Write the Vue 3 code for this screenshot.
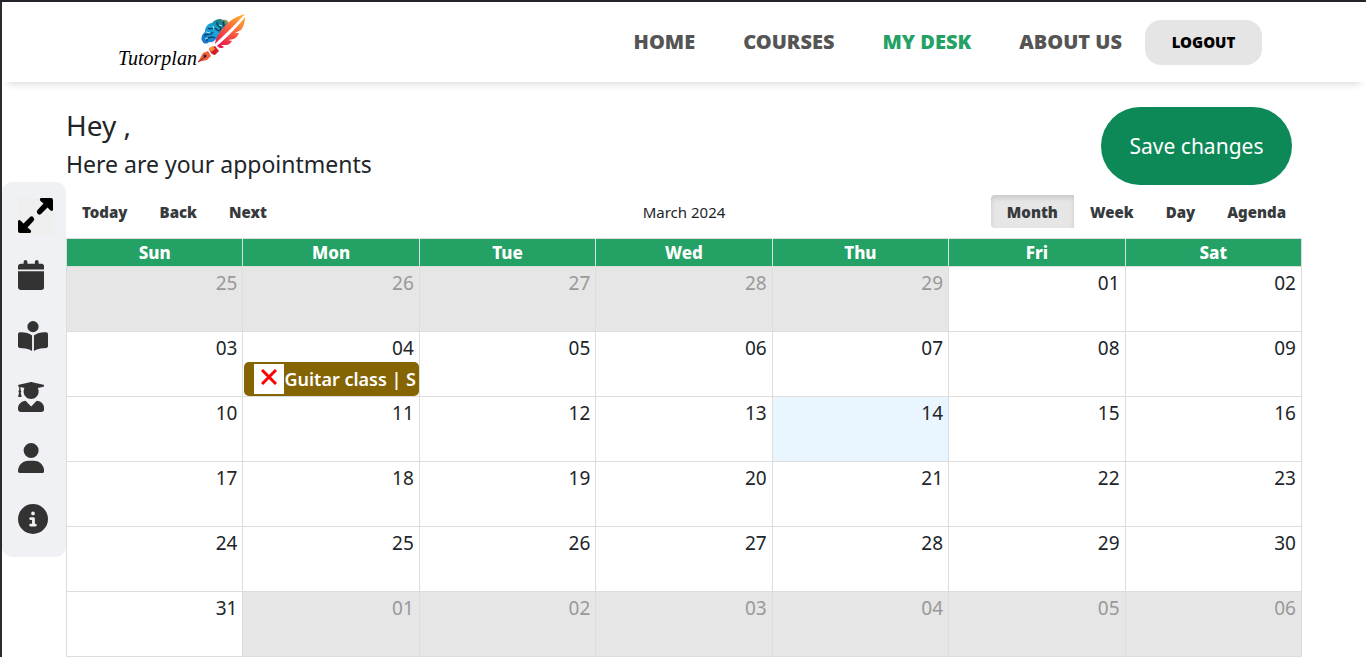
<script setup>
const navLinks = [
  { label: 'HOME', active: false },
  { label: 'COURSES', active: false },
  { label: 'MY DESK', active: true },
  { label: 'ABOUT US', active: false },
]

const sideLinks = [
  {
    label: 'Calendar',
    width: 448,
    path: 'M96 32V64H48C21.5 64 0 85.5 0 112v48H448V112c0-26.5-21.5-48-48-48H352V32c0-17.7-14.3-32-32-32s-32 14.3-32 32V64H160V32c0-17.7-14.3-32-32-32S96 14.3 96 32zM448 192H0V464c0 26.5 21.5 48 48 48H400c26.5 0 48-21.5 48-48V192z',
  },
  {
    label: 'Courses',
    width: 512,
    path: 'M160 96a96 96 0 1 1 192 0A96 96 0 1 1 160 96zm80 152V512l-48.4-24.2c-20.9-10.4-43.5-17-66.8-19.3l-96-9.6C12.5 457.2 0 443.5 0 427V224c0-17.7 14.3-32 32-32H62.3c63.6 0 125.6 19.6 177.7 56zm32 264V248c52.1-36.4 114.1-56 177.7-56H480c17.7 0 32 14.3 32 32V427c0 16.4-12.5 30.2-28.8 31.8l-96 9.6c-23.2 2.3-45.9 8.9-66.8 19.3L272 512z',
  },
  {
    label: 'Students',
    width: 448,
    path: 'M319.4 320.6L224 416l-95.4-95.4C57.1 323.7 0 382.2 0 454.4v9.6c0 26.5 21.5 48 48 48h352c26.5 0 48-21.5 48-48v-9.6c0-72.2-57.1-130.7-128.6-133.8zM13.6 79.8l6.4 1.5v58.4c-7 4.2-12 11.5-12 20.3 0 8.4 4.6 15.4 11.1 19.7L3.5 242c-1.7 6.9 2.1 14 7.6 14h41.8c5.5 0 9.3-7.1 7.6-14l-15.6-62.3C51.4 175.4 56 168.4 56 160c0-8.8-5-16.1-12-20.3V87.1l66 15.9c-8.6 17.2-14 36.4-14 57 0 70.7 57.3 128 128 128s128-57.3 128-128c0-20.6-5.3-39.8-14-57l96.3-23.2c18.2-4.4 18.2-27.1 0-31.5l-190.4-46c-13-3.1-26.7-3.1-39.7 0L13.6 48.2c-18.1 4.4-18.1 27.2 0 31.6z',
  },
  {
    label: 'Profile',
    width: 448,
    path: 'M224 256A128 128 0 1 0 224 0a128 128 0 1 0 0 256zm-45.7 48C79.8 304 0 383.8 0 482.3C0 498.7 13.3 512 29.7 512H418.3c16.4 0 29.7-13.3 29.7-29.7C448 383.8 368.2 304 269.7 304H178.3z',
  },
  {
    label: 'About',
    width: 512,
    path: 'M256 512A256 256 0 1 0 256 0a256 256 0 1 0 0 512zM216 336h24V272H216c-13.3 0-24-10.7-24-24s10.7-24 24-24h48c13.3 0 24 10.7 24 24v88h8c13.3 0 24 10.7 24 24s-10.7 24-24 24H216c-13.3 0-24-10.7-24-24s10.7-24 24-24zm40-208a32 32 0 1 1 0 64 32 32 0 1 1 0-64z',
  },
]

const views = ['Month', 'Week', 'Day', 'Agenda']
const weekdays = ['Sun', 'Mon', 'Tue', 'Wed', 'Thu', 'Fri', 'Sat']

const weeks = Array.from({ length: 6 }, (_, w) =>
  Array.from({ length: 7 }, (_, d) => {
    const date = new Date(2024, 1, 25 + w * 7 + d)
    const inMonth = date.getMonth() === 2
    return {
      label: String(date.getDate()).padStart(2, '0'),
      off: !inMonth,
      today: inMonth && date.getDate() === 14,
      event: inMonth && date.getDate() === 4 ? 'Guitar class | S' : '',
    }
  })
)
</script>

<template>
  <div class="page">
    <header class="topbar">
      <a class="logo" href="#">
        <span class="logo-text">Tutorplan</span>
        <svg class="logo-art" viewBox="0 0 50 50" aria-hidden="true">
          <defs>
            <linearGradient id="brain" x1="0" y1="1" x2="1" y2="0">
              <stop offset="0" stop-color="#1668c8" />
              <stop offset="0.5" stop-color="#19a9dc" />
              <stop offset="0.8" stop-color="#17808c" />
              <stop offset="1" stop-color="#f0b53c" />
            </linearGradient>
            <linearGradient id="feather" gradientUnits="userSpaceOnUse" x1="47" y1="2" x2="24" y2="34">
              <stop offset="0" stop-color="#ffb02e" />
              <stop offset="0.4" stop-color="#fc6f3c" />
              <stop offset="1" stop-color="#e8104f" />
            </linearGradient>
          </defs>
          <path d="M6 28C3 25 5 20 8 18C8 12 12 9 15 9C18 5 24 4 26 6C30 5 33 8 31 12L22 21C19 26 16 29 12 28C10 30 7 30 6 28Z" fill="url(#brain)" />
          <path d="M7 22c4-4 6 1 9-4M11 14c3 3 5-2 8 1s3 2 5 0M20 8c-1 5 4 3 4 7M27 7c-2 3 1 4 0 6M10 27c-1-3 4-5 8-3" fill="none" stroke="#0b3f66" stroke-width="1.4" />
          <path d="M9 18l4 1M16 12l1 3M22 11l3 1M8 25l3-1" fill="none" stroke="#8ceaf2" stroke-width="1.2" />
          <path d="M48 0C39 2 31 8 26 14C22 19 19 23 18 30C27 21 37 12 48 0Z" fill="url(#feather)" />
          <path d="M48 3C48 8 47 12 44 16L38 19L42 19C41 22 39 24 37 25L31 26L35 27C33 30 31 31 29 31L24 31L27 33C25 35 22 34 20 32C28 25 38 16 48 3Z" fill="url(#feather)" />
          <path d="M12 35l6-3 4 5-4 4c-3 0-5-3-6-6z" fill="#d31c2d" />
          <path d="M12 34l4-2 2 3-4 3z" fill="#fb8f2f" />
          <path d="M1 48L6 39L11 37L14 42L10 46Z" fill="#f0623a" />
          <path d="M1 48L8 43" stroke="#8a1634" stroke-width="1" />
          <circle cx="8" cy="42" r="1.6" fill="#4b1638" />
        </svg>
      </a>
      <nav class="nav">
        <a v-for="link in navLinks" :key="link.label" href="#" :class="{ active: link.active }">{{ link.label }}</a>
      </nav>
      <button type="button" class="logout">LOGOUT</button>
    </header>

    <div class="body">
      <aside class="sidebar">
        <button type="button" class="expand" aria-label="Expand menu">
          <svg viewBox="0 0 35 35" aria-hidden="true">
            <path d="M23 0H33Q35 0 35 2V12Q34 14 32 12L29.500 9.500L23 16Q21 17.500 19.500 15.500Q18 13.500 19.500 12L25.500 5.500L22.500 3Q21 1 23 0Z" />
            <path d="M12 35H2Q0 35 0 33V23Q1 21 3 23L5.500 25.500L12 19Q14 17.500 15.500 19.500Q17 21.500 15.500 23L9.500 29.500L12.500 32Q14 34 12 35Z" />
          </svg>
        </button>
        <a v-for="item in sideLinks" :key="item.label" href="#" :aria-label="item.label">
          <svg :viewBox="`0 0 ${item.width} 512`" aria-hidden="true"><path :d="item.path" /></svg>
        </a>
      </aside>

      <main class="content">
        <section class="intro">
          <div>
            <h1>Hey ,</h1>
            <h2>Here are your appointments</h2>
          </div>
          <button type="button" class="save">Save changes</button>
        </section>

        <div class="toolbar">
          <div class="group">
            <button type="button">Today</button>
            <button type="button">Back</button>
            <button type="button">Next</button>
          </div>
          <span class="period">March 2024</span>
          <div class="group">
            <button v-for="view in views" :key="view" type="button" :class="{ selected: view === 'Month' }">{{ view }}</button>
          </div>
        </div>

        <table class="month">
          <thead>
            <tr>
              <th v-for="day in weekdays" :key="day" scope="col">{{ day }}</th>
            </tr>
          </thead>
          <tbody>
            <tr v-for="(week, w) in weeks" :key="w">
              <td v-for="(day, d) in week" :key="d" :class="{ off: day.off, today: day.today }">
                <div class="date">{{ day.label }}</div>
                <div v-if="day.event" class="event">
                  <button type="button" aria-label="Delete appointment">
                    <svg viewBox="0 0 16 16" aria-hidden="true"><path d="M1 1L15 15M15 1L1 15" /></svg>
                  </button>
                  <span>{{ day.event }}</span>
                </div>
              </td>
            </tr>
          </tbody>
        </table>
      </main>
    </div>
  </div>
</template>

<style>
body {
  background: #fff;
  overflow: hidden;
}
</style>

<style scoped>
.page {
  box-sizing: border-box;
  min-height: 100vh;
  border-top: 2px solid #212529;
  border-left: 2px solid #2b2c2f;
  color: #212529;
  font-family: "Noto Sans", "Open Sans", sans-serif;
}
.page * {
  box-sizing: border-box;
}
button {
  font-family: inherit;
  border: 0;
  padding: 0;
  cursor: pointer;
}
a {
  text-decoration: none;
}
.topbar {
  display: flex;
  align-items: center;
  height: 80px;
  padding: 0 104px 0 116px;
  box-shadow: 0 8px 8px -6px rgba(0, 0, 0, 0.15);
}
.logo {
  display: flex;
  align-items: flex-end;
  color: #000;
}
.logo-text {
  font: italic 20px/24px "Liberation Serif", serif;
}
.logo-art {
  width: 50px;
  height: 50px;
  margin-bottom: 6px;
}
.nav {
  display: flex;
  gap: 48px;
  margin-left: auto;
  margin-right: 23px;
}
.nav a {
  color: #555;
  font-size: 20px;
  line-height: 28px;
  font-weight: 900;
}
.nav a.active {
  color: #24a164;
}
.logout {
  width: 117px;
  height: 45px;
  border-radius: 16px;
  background: #e5e5e5;
  color: #000;
  font-size: 15px;
  font-weight: 900;
}
.body {
  display: flex;
  align-items: flex-start;
}
.sidebar {
  display: flex;
  flex-direction: column;
  gap: 31px;
  flex: none;
  width: 64px;
  margin-top: 100px;
  padding: 16px 16px 23px;
  border-radius: 10px;
  background: #f0f1f4;
}
.sidebar svg {
  display: block;
  height: 30px;
  fill: #333;
}
.expand {
  display: flex;
  align-items: flex-start;
  width: 35px;
  height: 37px;
  margin-bottom: -6px;
  background: #efefef;
}
.sidebar .expand svg {
  height: 35px;
  fill: #000;
}
.content {
  flex: 1;
  min-width: 0;
  padding: 25px 64px 0 0;
}
.intro {
  display: flex;
  justify-content: space-between;
  height: 78px;
  padding-right: 10px;
}
h1,
h2 {
  margin: 0;
  font-weight: 400;
}
h1 {
  font-size: 28px;
  line-height: 36px;
}
h2 {
  font-size: 23px;
  line-height: 42px;
}
.save {
  width: 191px;
  height: 78px;
  border-radius: 39px;
  background: #0d8957;
  color: #fff;
  font-size: 21px;
}
.toolbar {
  display: grid;
  grid-template-columns: 1fr auto 1fr;
  align-items: center;
  margin: 10px 0;
}
.group {
  display: flex;
}
.group:last-child {
  justify-content: flex-end;
}
.group button {
  height: 33px;
  padding: 0 16px;
  background: none;
  color: #373a3c;
  font-size: 15px;
  font-weight: 900;
}
.group .selected {
  border-radius: 4px 0 0 4px;
  background: #e6e6e6;
  box-shadow: inset 0 3px 5px rgba(0, 0, 0, 0.125);
}
.period {
  font-size: 15px;
}
.month {
  width: 100%;
  table-layout: fixed;
  border-collapse: separate;
  border-spacing: 0;
  border: solid #ddd;
  border-width: 0 1px 1px 0;
}
th,
td {
  border: solid #ddd;
  border-width: 1px 0 0 1px;
}
th {
  height: 28px;
  padding: 0;
  background: #24a164;
  color: #fff;
  font-size: 17px;
  line-height: 26px;
  font-weight: 800;
}
td {
  height: 65px;
  padding: 0;
  vertical-align: top;
}
.date {
  padding: 2px 5px 0 0;
  font-size: 19px;
  line-height: 28px;
  text-align: right;
}
.off {
  background: #e6e6e6;
}
.off .date {
  color: #999;
}
.today {
  background: #eaf6ff;
}
.event {
  display: flex;
  align-items: center;
  height: 34px;
  margin-left: 1px;
  padding-left: 10px;
  border-radius: 5px;
  background: #856404;
  color: #fff;
  font-size: 18px;
  font-weight: 600;
  white-space: nowrap;
}
.event button {
  flex: none;
  width: 30px;
  height: 30px;
  background: #fff;
}
.event svg {
  width: 16px;
  height: 16px;
  fill: none;
  stroke: #f00;
  stroke-width: 3;
}
</style>
